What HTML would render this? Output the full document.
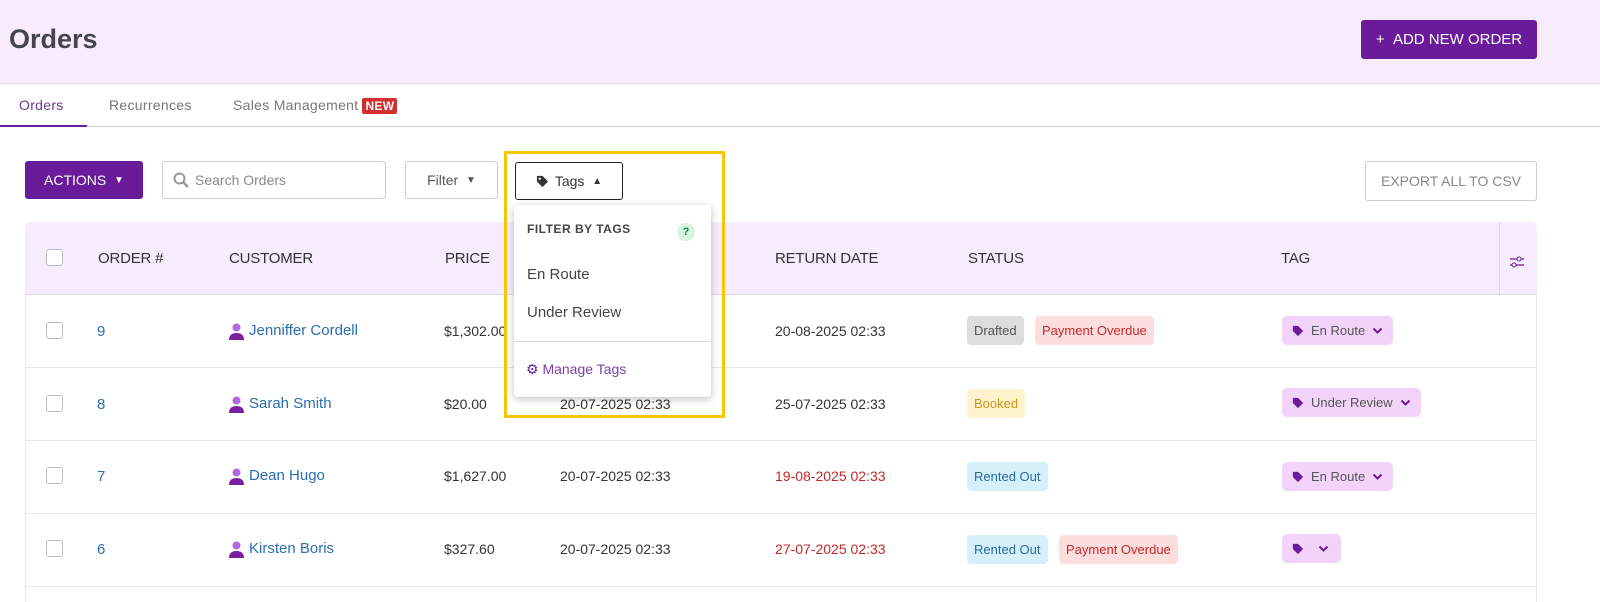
<!DOCTYPE html>
<html><head><style>
*{box-sizing:border-box;margin:0;padding:0}
body{width:1600px;height:602px;overflow:hidden;background:#fff;font-family:"Liberation Sans",sans-serif;color:#333;position:relative}
.abs{position:absolute}
.hdr{left:0;top:0;width:1600px;height:84px;background:#f7ebfd;border-bottom:1px solid #e6dcef}
.title{left:9px;top:24px;font-size:27px;font-weight:bold;color:#454550}
.add{left:1361px;top:20px;width:176px;height:39px;background:#6a1b9a;border-radius:3px;color:#fff;font-size:15px;display:flex;align-items:center;justify-content:center}
.tab{top:97px;font-size:14px;color:#777;letter-spacing:.3px}
.tabline{left:0;top:126px;width:1600px;height:1px;background:#ccc}
.new{background:#d32f2f;color:#fff;font-size:12px;font-weight:bold;padding:1px 3px;border-radius:2px;margin-left:4px}
.btn{border:1px solid #ccc;border-radius:3px;height:38px;display:flex;align-items:center;justify-content:center;font-size:14px;color:#555;background:#fff}
.th{top:250px;font-size:15px;color:#333;letter-spacing:-.2px}
.cb{width:17px;height:17px;border:1px solid #bbb;border-radius:3px;background:#fff}
.row{left:25px;width:1512px;height:1px;background:#e6e6e6}
.td{font-size:14px;color:#333}
.lnk{color:#2a6db0;font-size:15px}
.chip{height:29px;border-radius:4px;font-size:13px;display:flex;align-items:center;padding:0 7px}
.tagc{height:29px;border-radius:5px;background:#f2d4fb;color:#555;font-size:13px;display:flex;align-items:center;padding:0 10px;gap:7px}
.user{display:inline-block;vertical-align:middle;margin-right:5px}
</style></head><body>
<div class="abs hdr"></div>
<div class="abs title">Orders</div>
<div class="abs add">+&nbsp;&nbsp;ADD NEW ORDER</div>
<div class="abs tab" style="left:19px;color:#6a3c8a">Orders</div>
<div class="abs tab" style="left:109px">Recurrences</div>
<div class="abs tab" style="left:233px">Sales Management<span class="new">NEW</span></div>
<div class="abs tabline"></div>
<div class="abs" style="left:0;top:125px;width:87px;height:2px;background:#6a1b9a"></div>

<div class="abs btn" style="left:25px;top:161px;width:118px;background:#6a1b9a;border-color:#6a1b9a;color:#fff">ACTIONS&nbsp;&nbsp;<span style="font-size:10px">▼</span></div>
<div class="abs btn" style="left:162px;top:161px;width:224px;justify-content:flex-start;padding-left:10px;color:#888"><svg width="16" height="16" viewBox="0 0 16 16" style="margin-right:6px"><circle cx="6.5" cy="6.5" r="5" fill="none" stroke="#999" stroke-width="2"/><path d="M10 10l5 5" stroke="#999" stroke-width="2.5"/></svg>Search Orders</div>
<div class="abs btn" style="left:405px;top:161px;width:93px">Filter&nbsp;&nbsp;<span style="font-size:10px">▼</span></div>
<div class="abs btn" style="left:515px;top:162px;width:108px;border:1.5px solid #222;color:#333"><svg width="13" height="13" viewBox="0 0 14 14" style="margin-right:6px"><path d="M1 1h6l6 6-6 6-6-6z" fill="#333"/><circle cx="4" cy="4" r="1.2" fill="#fff"/></svg>Tags&nbsp;&nbsp;<span style="font-size:10px">▲</span></div>
<div class="abs btn" style="left:1365px;top:161px;width:172px;height:40px;color:#888">EXPORT ALL TO CSV</div>

<div class="abs" style="left:25px;top:222px;width:1512px;height:73px;background:#f6ecfd;border-radius:5px 5px 0 0;border-bottom:1px solid #e0d6ea"></div>
<div class="abs" style="left:1499px;top:222px;width:1px;height:73px;background:#e0d6ea"></div>
<div class="abs cb" style="left:46px;top:249px"></div>
<div class="abs th" style="left:98px">ORDER #</div>
<div class="abs th" style="left:229px">CUSTOMER</div>
<div class="abs th" style="left:445px">PRICE</div>
<div class="abs th" style="left:775px">RETURN DATE</div>
<div class="abs th" style="left:968px">STATUS</div>
<div class="abs th" style="left:1281px">TAG</div>
<svg class="abs" style="left:1509px;top:256px" width="16" height="12" viewBox="0 0 16 12"><path d="M1 3h14M1 9h14" stroke="#6a1b9a" stroke-width="1.3"/><circle cx="10" cy="3" r="2" fill="#fff" stroke="#6a1b9a"/><circle cx="5" cy="9" r="2" fill="#fff" stroke="#6a1b9a"/></svg>

<div class="abs row" style="top:367px"></div>
<div class="abs row" style="top:440px"></div>
<div class="abs row" style="top:513px"></div>
<div class="abs row" style="top:586px"></div>
<div class="abs" style="left:1536px;top:295px;width:1px;height:307px;background:#e6e6e6"></div>
<div class="abs" style="left:25px;top:295px;width:1px;height:307px;background:#e6e6e6"></div>

<!-- rows -->
<div class="abs cb" style="left:46px;top:322px"></div>
<div class="abs lnk" style="left:97px;top:323px">9</div>
<div class="abs lnk" style="left:229px;top:322px"><svg class="user" width="15" height="17" viewBox="0 0 15 17"><circle cx="7.5" cy="4.5" r="4" fill="#b06ae0"/><path d="M0 17c0-5 3-7 7.5-7s7.5 2 7.5 7z" fill="#7b1fa2"/></svg>Jenniffer Cordell</div>
<div class="abs td" style="left:444px;top:323px">$1,302.00</div>
<div class="abs td" style="left:775px;top:323px">20-08-2025 02:33</div>
<div class="abs chip" style="left:967px;top:316px;background:#ddd;color:#555">Drafted</div>
<div class="abs chip" style="left:1035px;top:316px;background:#fddede;color:#c62828">Payment Overdue</div>
<div class="abs tagc" style="left:1282px;top:316px"><svg width="12" height="12" viewBox="0 0 14 14"><path d="M1 1h6l6 6-6 6-6-6z" fill="#6a1b9a"/></svg>En Route<svg width="11" height="8" viewBox="0 0 11 8"><path d="M1.5 1.5l4 4 4-4" fill="none" stroke="#6a1b9a" stroke-width="2"/></svg></div>

<div class="abs cb" style="left:46px;top:395px"></div>
<div class="abs lnk" style="left:97px;top:396px">8</div>
<div class="abs lnk" style="left:229px;top:395px"><svg class="user" width="15" height="17" viewBox="0 0 15 17"><circle cx="7.5" cy="4.5" r="4" fill="#b06ae0"/><path d="M0 17c0-5 3-7 7.5-7s7.5 2 7.5 7z" fill="#7b1fa2"/></svg>Sarah Smith</div>
<div class="abs td" style="left:444px;top:396px">$20.00</div>
<div class="abs td" style="left:560px;top:396px">20-07-2025 02:33</div>
<div class="abs td" style="left:775px;top:396px">25-07-2025 02:33</div>
<div class="abs chip" style="left:967px;top:389px;background:#fff3cd;color:#c8961e">Booked</div>
<div class="abs tagc" style="left:1282px;top:388px"><svg width="12" height="12" viewBox="0 0 14 14"><path d="M1 1h6l6 6-6 6-6-6z" fill="#6a1b9a"/></svg>Under Review<svg width="11" height="8" viewBox="0 0 11 8"><path d="M1.5 1.5l4 4 4-4" fill="none" stroke="#6a1b9a" stroke-width="2"/></svg></div>

<div class="abs cb" style="left:46px;top:467px"></div>
<div class="abs lnk" style="left:97px;top:468px">7</div>
<div class="abs lnk" style="left:229px;top:467px"><svg class="user" width="15" height="17" viewBox="0 0 15 17"><circle cx="7.5" cy="4.5" r="4" fill="#b06ae0"/><path d="M0 17c0-5 3-7 7.5-7s7.5 2 7.5 7z" fill="#7b1fa2"/></svg>Dean Hugo</div>
<div class="abs td" style="left:444px;top:468px">$1,627.00</div>
<div class="abs td" style="left:560px;top:468px">20-07-2025 02:33</div>
<div class="abs td" style="left:775px;top:468px;color:#c62828">19-08-2025 02:33</div>
<div class="abs chip" style="left:967px;top:462px;background:#d6f0fa;color:#2a6d9a">Rented Out</div>
<div class="abs tagc" style="left:1282px;top:462px"><svg width="12" height="12" viewBox="0 0 14 14"><path d="M1 1h6l6 6-6 6-6-6z" fill="#6a1b9a"/></svg>En Route<svg width="11" height="8" viewBox="0 0 11 8"><path d="M1.5 1.5l4 4 4-4" fill="none" stroke="#6a1b9a" stroke-width="2"/></svg></div>

<div class="abs cb" style="left:46px;top:540px"></div>
<div class="abs lnk" style="left:97px;top:541px">6</div>
<div class="abs lnk" style="left:229px;top:540px"><svg class="user" width="15" height="17" viewBox="0 0 15 17"><circle cx="7.5" cy="4.5" r="4" fill="#b06ae0"/><path d="M0 17c0-5 3-7 7.5-7s7.5 2 7.5 7z" fill="#7b1fa2"/></svg>Kirsten Boris</div>
<div class="abs td" style="left:444px;top:541px">$327.60</div>
<div class="abs td" style="left:560px;top:541px">20-07-2025 02:33</div>
<div class="abs td" style="left:775px;top:541px;color:#c62828">27-07-2025 02:33</div>
<div class="abs chip" style="left:967px;top:535px;background:#d6f0fa;color:#2a6d9a">Rented Out</div>
<div class="abs chip" style="left:1059px;top:535px;background:#fddede;color:#c62828">Payment Overdue</div>
<div class="abs tagc" style="left:1282px;top:534px;width:59px;gap:14px"><svg width="12" height="12" viewBox="0 0 14 14"><path d="M1 1h6l6 6-6 6-6-6z" fill="#6a1b9a"/></svg><svg width="11" height="8" viewBox="0 0 11 8"><path d="M1.5 1.5l4 4 4-4" fill="none" stroke="#6a1b9a" stroke-width="2"/></svg></div>

<!-- dropdown -->
<div class="abs" style="left:514px;top:205px;width:197px;height:192px;background:#fff;border-radius:4px;box-shadow:0 2px 8px rgba(0,0,0,.25)">
 <div class="abs" style="left:13px;top:17px;font-size:12px;font-weight:bold;color:#444;letter-spacing:.5px">FILTER BY TAGS</div>
 <div class="abs" style="left:163px;top:18px;width:18px;height:18px;border-radius:50%;background:#d5f5e3;color:#1e8449;font-size:11px;font-weight:bold;text-align:center;line-height:18px">?</div>
 <div class="abs" style="left:13px;top:61px;font-size:15px;color:#444">En Route</div>
 <div class="abs" style="left:13px;top:99px;font-size:15px;color:#444">Under Review</div>
 <div class="abs" style="left:0;top:136px;width:197px;height:1px;background:#ddd"></div>
 <div class="abs" style="left:12px;top:156px;font-size:14px;color:#7b3fa0"><span style="color:#6a1b9a">⚙</span> Manage Tags</div>
</div>
<div class="abs" style="left:504px;top:151px;width:221px;height:267px;border:3px solid #f7c600"></div>
</body></html>
